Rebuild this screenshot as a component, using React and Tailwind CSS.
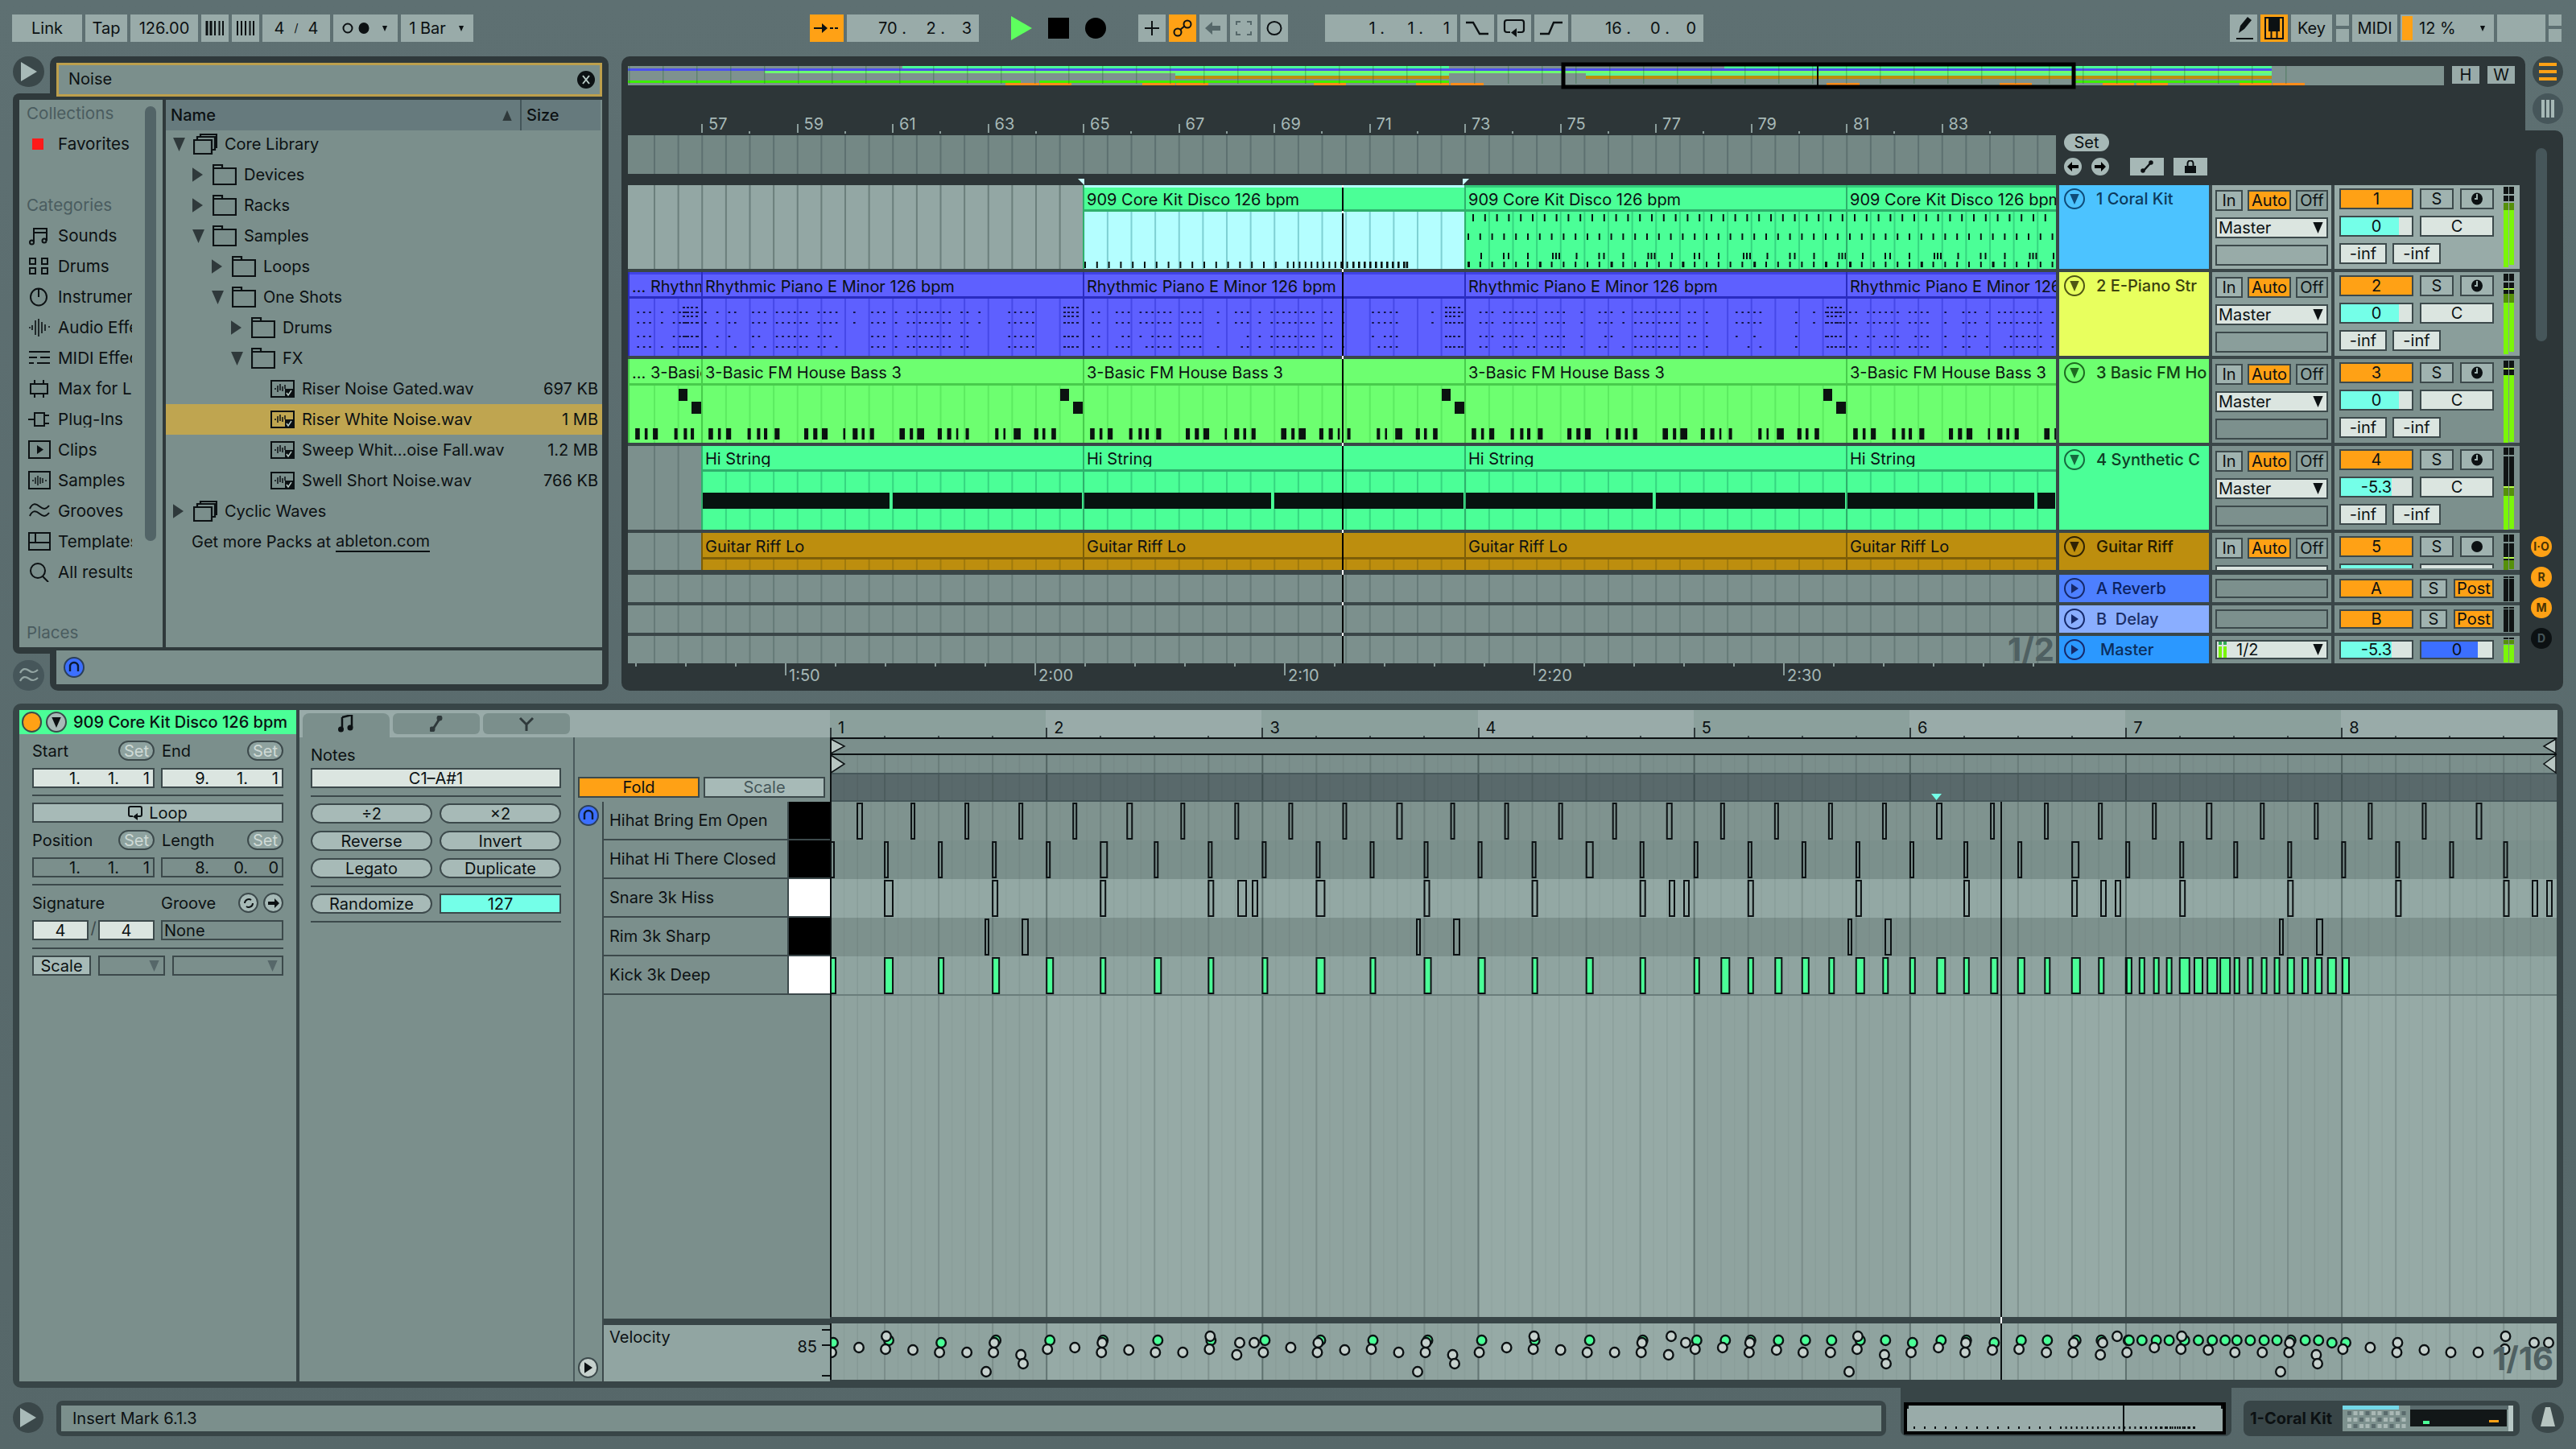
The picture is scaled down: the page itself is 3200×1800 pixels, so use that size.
import React from 'react';

const r = (i) => { const s = Math.sin(i * 12.9898) * 43758.5453; return s - Math.floor(s); };

/* ---------- small drawings ---------- */
const Tri = ({ dir = 'right', className = '' }) => {
  const p = { right: '0,0 12,8 0,16', down: '0,0 14,0 7,16', up: '7,0 14,16 0,16' }[dir];
  return <svg viewBox={dir === 'right' ? '0 0 12 16' : '0 0 14 16'} className={className}><polygon points={p} fill="currentColor" /></svg>;
};
const Folder = () => (
  <svg width="30" height="26" viewBox="0 0 30 26" fill="none" stroke="#0c1113" strokeWidth="2.2" className="shrink-0"><path d="M1 5h28v20H1zM1 5V1h11v4" /></svg>
);
const Stack = () => (
  <svg width="30" height="26" viewBox="0 0 30 26" fill="none" stroke="#0c1113" strokeWidth="2.2" className="shrink-0"><path d="M1 8h22v17H1zM5 8V4h22v16h-4M9 4V1h20v16h-2" /></svg>
);
const FileI = () => (
  <svg width="30" height="22" viewBox="0 0 30 22" className="shrink-0" fill="none" stroke="#0c1113" strokeWidth="2"><path d="M1 1h28v20H1z" /><path d="M5 11h2M9 7v8M12 5v8M15 8v6M18 6v5" strokeWidth="1.5" /><rect x="18" y="11" width="11" height="10" fill="#0c1113" stroke="none" /><path d="M20 16l2 3 4-6" stroke="#b9cbc6" strokeWidth="1.5" /></svg>
);
const S = ({ children }) => <svg width="28" height="24" viewBox="0 0 28 24" fill="none" stroke="#0c1113" strokeWidth="2" className="shrink-0">{children}</svg>;
const sideIcons = {
  sounds: <S><path d="M7 20V3h16v15M7 8h16" /><circle cx="4.5" cy="20" r="2.5" /><circle cx="20" cy="18" r="2.5" /></S>,
  drums: <S><path d="M2 2h7v7H2zM17 2h7v7h-7zM2 14h7v7H2zM17 14h7v7h-7z" /></S>,
  inst: <S><ellipse cx="13" cy="12" rx="10" ry="10.5" /><path d="M13 1v11" /></S>,
  audio: <S><path d="M1 12h2M5 9v6M9 3v18M13 1v22M17 5v14M21 8v8M25 11h2" strokeWidth="1.6" /></S>,
  midi: <S><path d="M1 4h26M1 4h0M1 11h10M15 11h12M1 18h6M11 18h16" /></S>,
  max: <S><path d="M3 6h21v12H3zM8 1v5M19 1v5M8 18v5M19 18v5" /></S>,
  plug: <S><path d="M8 4h12v16H8zM0 12h8M20 7h6M20 17h6" /></S>,
  clips: <S><path d="M1 1h26v21H1z" /><path d="M11 6l8 5.5-8 5.5z" fill="#0c1113" stroke="none" /></S>,
  samples: <S><path d="M1 1h26v21H1z" /><path d="M5 12h2M9 8v8M12 6v12M15 8v8M18 9v6M21 12h2" strokeWidth="1.4" /></S>,
  grooves: <S><path d="M2 9c3-7 7-7 12-3s8 4 12-1M2 18c3-7 7-7 12-3s8 4 12-1" /></S>,
  templ: <S><path d="M1 1h26v21H1zM1 13h26M9 1v12" /></S>,
  all: <S><ellipse cx="12" cy="10" rx="9" ry="9" /><path d="M18 17l7 7" /></S>,
};
const Headphone = ({ size = 'w-[26px] h-[26px]' }) => (
  <div className={`${size} rounded-full border-2 border-[#2b3f5a] bg-[#3c6fff] flex items-center justify-center shrink-0`}>
    <svg width="14" height="16" viewBox="0 0 14 16" fill="none" stroke="#0c1a33" strokeWidth="2.4"><path d="M2 13V7a5 5 0 0 1 10 0v6" /></svg>
  </div>
);
const Wave2 = () => (
  <svg width="24" height="22" viewBox="0 0 24 22" fill="none" stroke="#93a5a3" strokeWidth="2.2"><path d="M1 8c3-6 7-6 11-3s7 3 11-1M1 18c3-6 7-6 11-3s7 3 11-1" /></svg>
);

/* ---------- transport ---------- */
const TB = ({ className = '', children }) => (
  <div className={`h-[34px] flex items-center justify-center shrink-0 bg-[#99aba9] ${className}`}>{children}</div>
);
const Pos = ({ parts, className = '', last = 'w-[33px]', mid = 'w-[48px]', pad = 'pr-[9px]' }) => (
  <div className={`flex items-center justify-end ${pad} ${className}`}>
    {parts.map((p, i) => <span key={i} className={`text-right ${i === parts.length - 1 ? last : mid}`}>{p}</span>)}
  </div>
);
const Stack2 = () => (
  <div className="w-[16px] h-[34px] flex flex-col justify-between shrink-0">
    <div className="h-[14px] bg-[#99aba9]" /><div className="h-[16px] bg-[#99aba9]" />
  </div>
);

function TopBar() {
  return (
    <div className="h-[70px] shrink-0 pt-[18px] pl-[15px] flex gap-[4px] items-start">
      <TB className="w-[87px]">Link</TB>
      <TB className="w-[52px]">Tap</TB>
      <TB className="w-[84px]">126.00</TB>
      <TB className="w-[34px]"><svg width="24" height="18"><path d="M2 0v18M7 0v18M12 0v18M17.5 0v18M22 0v18" stroke="#0c1113" strokeWidth="2" /><path d="M2 0v18M7 0v18" stroke="#0c1113" strokeWidth="3" /></svg></TB>
      <TB className="w-[34px]"><svg width="24" height="18"><path d="M2 0v18M7 0v18M12 0v18M17.5 0v18M22 0v18" stroke="#0c1113" strokeWidth="2" /></svg></TB>
      <TB className="w-[84px] gap-[12px]"><span>4</span><span className="text-[14px]">/</span><span>4</span></TB>
      <TB className="w-[80px] gap-[2px]">
        <svg width="34" height="14"><circle cx="7" cy="7" r="5.5" fill="none" stroke="#0c1113" strokeWidth="2" /><ellipse cx="27" cy="7" rx="6.5" ry="7" fill="#0c1113" /></svg>
        <Tri dir="down" className="w-[10px] h-[7px] ml-[12px] text-[#0c1113]" />
      </TB>
      <TB className="w-[90px] gap-[14px]"><span>1 Bar</span><Tri dir="down" className="w-[10px] h-[7px] text-[#0c1113]" /></TB>

      <TB className="w-[42px] ml-[414px] !bg-[#ffa115]"><svg width="32" height="16" fill="#0c1113"><path d="M0 7h10V2l7 6-7 6V9H0zM20 7h4v2h-4zM26 7h4v2h-4z" /></svg></TB>
      <TB className="w-[164px]"><Pos className="w-full" parts={['70 .', '2 .', '3']} /></TB>
      <div className="ml-[36px] w-[26px] h-[34px] flex items-center shrink-0"><svg width="26" height="30"><polygon points="0,0 26,15 0,30" fill="#5eff5e" /></svg></div>
      <div className="ml-[16px] w-[26px] h-[34px] flex items-center shrink-0"><div className="w-[26px] h-[26px] bg-black" /></div>
      <div className="ml-[16px] w-[26px] h-[34px] flex items-center shrink-0"><div className="w-[26px] h-[26px] rounded-full bg-black" /></div>
      <TB className="w-[34px] ml-[36px]"><svg width="20" height="18" stroke="#0c1113" strokeWidth="2"><path d="M10 0v18M1 9h18" /></svg></TB>
      <TB className="w-[34px] !bg-[#ffa115]"><svg width="24" height="22" fill="none" stroke="#0c1113" strokeWidth="2"><ellipse cx="6" cy="16" rx="4.5" ry="4.5" /><ellipse cx="18" cy="6" rx="4.5" ry="4.5" /><path d="M9 13l6-5" /></svg></TB>
      <TB className="w-[34px]"><svg width="20" height="16" fill="#56686a"><path d="M0 8l9-8v5h10v6H9v5z" /></svg></TB>
      <TB className="w-[34px]"><svg width="20" height="18" fill="none" stroke="#56686a" strokeWidth="2"><path d="M1 5V1h5M14 1h5v4M19 13v4h-5M6 17H1v-4" /></svg></TB>
      <TB className="w-[34px]"><svg width="20" height="18" fill="none" stroke="#0c1113" strokeWidth="2"><ellipse cx="10" cy="9" rx="8.5" ry="8" /></svg></TB>

      <TB className="w-[164px] ml-[42px]"><Pos className="w-full" parts={['1 .', '1 .', '1']} /></TB>
      <TB className="w-[42px]"><svg width="28" height="18" fill="none" stroke="#0c1113" strokeWidth="2.4"><path d="M0 2h9l8 14h11" /></svg></TB>
      <TB className="w-[42px]"><svg width="28" height="24" fill="none" stroke="#0c1113" strokeWidth="2.2"><path d="M9 17H5a3 3 0 0 1-3-3V5a3 3 0 0 1 3-3h18a3 3 0 0 1 3 3v9a3 3 0 0 1-3 3h-5" /><path d="M17 12v11l-7-5.5z" fill="#0c1113" stroke="none" /></svg></TB>
      <TB className="w-[42px]"><svg width="28" height="18" fill="none" stroke="#0c1113" strokeWidth="2.4"><path d="M0 16h11l6-14h11" /></svg></TB>
      <TB className="w-[164px]"><Pos className="w-full" parts={['16 .', '0 .', '0']} /></TB>

      <TB className="w-[34px] ml-[650px]"><svg width="24" height="28" fill="#0c1113"><path d="M6 20l2-9 9-11 5 4-9 11zM3 26h21v2H3z" /><path d="M6 21l5-2" /></svg></TB>
      <TB className="w-[34px] !bg-[#ffa115]"><svg width="24" height="28" fill="none" stroke="#0c1113" strokeWidth="2"><path d="M1 1h22v26H1zM8.5 17v10M15.5 17v10" /><path d="M6 1h5v16H6zM13 1h5v16h-5z" fill="#0c1113" /></svg></TB>
      <TB className="w-[51px]">Key</TB>
      <div className="ml-[1px]"><Stack2 /></div>
      <TB className="w-[56px]">MIDI</TB>
      <TB className="w-[116px] !justify-start gap-[8px]">
        <div className="ml-[2px] h-[30px] w-[13px] bg-[#ffa115]" /><span>12 %</span>
        <Tri dir="down" className="w-[10px] h-[7px] ml-[20px] text-[#0c1113]" />
      </TB>
      <TB className="w-[60px]" />
      <Stack2 />
    </div>
  );
}

/* ---------- browser ---------- */
const sideItems = [
  ['sounds', 'Sounds'], ['drums', 'Drums'], ['inst', 'Instruments'], ['audio', 'Audio Effects'], ['midi', 'MIDI Effects'], ['max', 'Max for Live'],
  ['plug', 'Plug-Ins'], ['clips', 'Clips'], ['samples', 'Samples'], ['grooves', 'Grooves'], ['templ', 'Templates'], ['all', 'All results'],
];
const tree = [
  { l: 0, a: 'down', i: 'stack', t: 'Core Library' },
  { l: 1, a: 'right', i: 'folder', t: 'Devices' },
  { l: 1, a: 'right', i: 'folder', t: 'Racks' },
  { l: 1, a: 'down', i: 'folder', t: 'Samples' },
  { l: 2, a: 'right', i: 'folder', t: 'Loops' },
  { l: 2, a: 'down', i: 'folder', t: 'One Shots' },
  { l: 3, a: 'right', i: 'folder', t: 'Drums' },
  { l: 3, a: 'down', i: 'folder', t: 'FX' },
  { l: 4, i: 'file', t: 'Riser Noise Gated.wav', s: '697 KB' },
  { l: 4, i: 'file', t: 'Riser White Noise.wav', s: '1 MB', sel: true },
  { l: 4, i: 'file', t: 'Sweep Whit...oise Fall.wav', s: '1.2 MB' },
  { l: 4, i: 'file', t: 'Swell Short Noise.wav', s: '766 KB' },
  { l: 0, a: 'right', i: 'stack', t: 'Cyclic Waves' },
];
const indents = ['pl-[9px]', 'pl-[33px]', 'pl-[57px]', 'pl-[81px]', 'pl-[105px]'];

function Browser() {
  return (
    <div className="w-[740px] shrink-0 flex flex-col">
      <div className="h-[54px] flex">
        <div className="w-[46px] flex flex-col justify-between">
          <div className="w-[39px] h-[38px] rounded-full bg-[#3a4749] flex items-center justify-center">
            <svg width="22" height="26"><polygon points="1,1 21,13 1,25" fill="#a8bab8" /></svg>
          </div>
          <div className="h-[8px] rounded-tl-[8px] bg-[#2f393b]" />
        </div>
        <div className="flex-1 bg-[#2f393b] rounded-t-[10px] pt-[8px] px-[8px]">
          <div className="h-[42px] border-[3px] border-[#bd9f4c] bg-[#7b8f8c] flex items-center justify-between pl-[12px] pr-[6px]">
            <span className="pb-[3px]">Noise</span>
            <div className="w-[22px] h-[22px] rounded-full bg-[#0c1113] flex items-center justify-center">
              <svg width="12" height="14" stroke="#b9cbc6" strokeWidth="2"><path d="M2 2l8 10M10 2L2 12" /></svg>
            </div>
          </div>
        </div>
      </div>

      <div className="h-[680px] bg-[#2f393b] flex pl-[8px] pr-[8px] gap-[4px]">
        <div className="w-[178px] bg-[#7b8f8c] relative shrink-0 overflow-hidden text-[20.6px]">
          <div className="absolute left-[156px] top-[8px] w-[14px] h-[540px] rounded-full bg-[#526467]" />
          <div className="h-[34px] pl-[9px] flex items-center text-[#4a5c5f]">Collections</div>
          <div className="h-[38px] mt-[2px] pl-[16px] flex items-center gap-[18px]">
            <div className="w-[14px] h-[14px] bg-[#ff1a1a]" /><span>Favorites</span>
          </div>
          <div className="h-[38px]" />
          <div className="h-[38px] pl-[9px] flex items-center text-[#4a5c5f]">Categories</div>
          {sideItems.map(([k, t]) => (
            <div key={t} className="h-[38px] pl-[11px] flex items-center gap-[9px]">
              {sideIcons[k]}
              <span className="w-[92px] overflow-hidden whitespace-nowrap">{t}</span>
            </div>
          ))}
          <div className="h-[36px] mt-[38px] pl-[9px] flex items-center text-[#4a5c5f]">Places</div>
        </div>

        <div className="flex-1 bg-[#7b8f8c] flex flex-col overflow-hidden">
          <div className="h-[38px] bg-[#667a7d] flex items-center shrink-0 mr-[2px]">
            <span className="pl-[6px] font-medium w-[417px]">Name</span>
            <Tri dir="up" className="w-[14px] h-[13px] text-[#2f393b]" />
            <div className="ml-[9px] w-[2px] h-full bg-[#44565a]" />
            <span className="pl-[6px] font-medium">Size</span>
          </div>
          <div className="-mt-[2px]">
            {tree.map((n) => (
              <div key={n.t} className={`h-[38px] flex items-center whitespace-nowrap ${indents[n.l]} ${n.sel ? 'bg-[#bfa550]' : ''}`}>
                <div className="w-[25px] shrink-0 flex">
                  {n.a === 'right' && <Tri dir="right" className="w-[13px] h-[18px] text-[#2f393b]" />}
                  {n.a === 'down' && <Tri dir="down" className="w-[15px] h-[17px] text-[#2f393b]" />}
                </div>
                {n.i === 'stack' && <Stack />}
                {n.i === 'folder' && <Folder />}
                {n.i === 'file' && <FileI />}
                <span className="ml-[9px]">{n.t}</span>
                {n.s && <span className="ml-auto pr-[5px]">{n.s}</span>}
              </div>
            ))}
            <div className="h-[38px] pl-[32px] flex items-center gap-[6px] whitespace-nowrap">
              <span>Get more Packs at</span><span className="border-b-2 border-[#0c1113] leading-[24px]">ableton.com</span>
            </div>
          </div>
        </div>
      </div>

      <div className="h-[54px] flex">
        <div className="w-[46px] flex flex-col">
          <div className="h-[8px] rounded-bl-[8px] bg-[#2f393b]" />
          <div className="mt-[8px] w-[39px] h-[38px] rounded-full bg-[#46565a] flex items-center justify-center"><Wave2 /></div>
        </div>
        <div className="flex-1 bg-[#2f393b] rounded-b-[10px] pt-[4px] px-[8px]">
          <div className="h-[42px] bg-[#7b8f8c] flex items-center pl-[9px]"><Headphone /></div>
        </div>
      </div>
    </div>
  );
}

/* ---------- arrangement ---------- */
const LW = 1774;
const gridXs = Array.from({ length: 60 }, (_, k) => 32 + 29.625 * k);

const Grid = ({ x0 = 0, w = LW, h, color, className = '' }) => (
  <svg className={`absolute top-0 left-0 ${className}`} width={w} height={h}>
    {gridXs.map((x) => <rect key={x} x={x - x0} y="0" width="2" height={h} fill={color} />)}
  </svg>
);

function Overview() {
  const g = '#4bff97', b = '#4c50f0', l = '#6dff70', o = '#bd8e0e', n = '#3bf000', a = '#ff8c1a';
  const R = [
    [1121, 679, 0, 3, g], [2142, 680, 0, 3, g],
    [780, 2042, 3, 3, b],
    [950, 1872, 6, 3, l],
    [1460, 340, 9, 3, '#5cf29a'], [1970, 852, 9, 3, '#5cf29a'],
    [1460, 340, 12, 4, o], [1970, 852, 12, 4, o],
    [780, 488, 18, 3, n], [1291, 509, 18, 3, n], [2576, 246, 18, 3, n],
  ];
  const O = [[1249, 42], [1292, 39], [1419, 41], [1461, 40], [1632, 40], [1759, 41], [1802, 41], [2269, 41], [2484, 40], [2612, 39], [2654, 39], [2782, 40], [2823, 40]];
  return (
    <div className="flex h-[24px]">
      <svg width="2256" height="24" className="shrink-0 bg-[#7e928f] overflow-visible">
        {R.map(([x, w, y, h, c], i) => <rect key={i} x={x - 780} y={y} width={w} height={h} fill={c} />)}
        {O.map(([x, w]) => <rect key={x} x={x - 780} y="21" width={w} height="3" fill={a} />)}
        {Array.from({ length: 50 }, (_, i) => <rect key={i} x={i * 42 + 1} y="0" width="1.5" height="22" fill="#263" opacity=".35" />)}
        <rect x="1162" y="-2" width="634" height="28" fill="none" stroke="#000" strokeWidth="5" />
        <rect x="1477" y="0" width="2" height="24" fill="#000" />
      </svg>
      <TB2 className="ml-[10px]">H</TB2>
      <TB2 className="ml-[10px]">W</TB2>
    </div>
  );
}
const TB2 = ({ className = '', children }) => (
  <div className={`w-[34px] h-[22px] bg-[#99aba9] flex items-center justify-center ${className}`}>{children}</div>
);

function BarRuler() {
  const labels = [57, 59, 61, 63, 65, 67, 69, 71, 73, 75, 77, 79, 81, 83];
  return (
    <div className="h-[60px] pl-[91px] flex items-end w-[1774px] overflow-hidden">
      {labels.map((n) => (
        <div key={n} className="w-[118.5px] shrink-0 h-[22px] flex relative text-[#a6b8b6]">
          <div className="w-[2px] h-[11px] mt-[10px] bg-[#8a9c9a]" />
          <span className="pl-[7px] leading-[20px]">{n}</span>
          <div className="absolute left-[59px] bottom-0 w-[2px] h-[3px] bg-[#8a9c9a]" />
        </div>
      ))}
    </div>
  );
}

function TimeRuler() {
  const labs = { 3: '1:50', 8: '2:00', 13: '2:10', 18: '2:20', 23: '2:30' };
  return (
    <div className="h-[34px] flex pl-[9px] w-[1774px] overflow-hidden">
      {Array.from({ length: 29 }, (_, i) => (
        <div key={i} className="w-[62px] shrink-0 flex text-[#a6b8b6] whitespace-nowrap">
          <div className={`w-[2px] bg-[#8a9c9a] ${labs[i] ? 'h-[15px]' : 'h-[4px]'}`} />
          {labs[i] && <span className="pl-[3px] pt-[3px] leading-[24px]">{labs[i]}</span>}
        </div>
      ))}
    </div>
  );
}

function DrumNotes({ w, sel }) {
  const rects = [];
  if (!sel) {
    for (let i = 0; i * 14.8 + 8 < w; i++) rects.push([8 + i * 14.8, 3, 2, 9]);
    for (let i = 0; i * 14.8 + 2 < w; i++) rects.push([2 + i * 14.8, 27, 2, 8]);
    [18, 46, 52, 76, 107, 111, 115].forEach((p) => { for (let c = 0; c * 118.5 + p < w; c++) rects.push([p + c * 118.5, 51, 2, 8]); });
    for (let i = 0; i * 14.8 + 2 < w; i++) rects.push([2 + i * 14.8, 62, 2 + (i % 6 === 0 ? 1 : 0), 7]);
  } else {
    const stops = [];
    let x = 0;
    while (x < 474) {
      stops.push(x);
      x += x < 240 ? 14.8 : x < 330 ? 7.4 : x < 390 ? 7 : 3.6;
      if (x > 400) break;
    }
    stops.forEach((p) => rects.push([p, 62, p > 330 ? 2.6 : 2, 8]));
  }
  return rects.map(([x, y, wd, h], i) => <rect key={i} x={x} y={y} width={wd} height={h} fill="#0b1210" />);
}
function PianoNotes({ w, seed }) {
  const out = [];
  for (let i = 0; i * 7.4 + 2 < w; i++) {
    const x = 2 + i * 7.4;
    if (r((i + seed * 3) % 64 + 1) < 0.38) continue;
    [16, 29, 46, 59].forEach((y, j) => { if (!(j > 1 && r(i + j) < 0.2)) out.push(<rect key={`${i}-${j}`} x={x} y={y} width="2.6" height="2" fill="#14164a" />); });
  }
  const ends = w < 100 ? [w - 25] : w >= 474 ? [w - 26] : [];
  ends.forEach((e) => {
    [10, 16, 21, 29, 46, 59].forEach((y) => [0, 5, 10, 16].forEach((d) => out.push(<rect key={`c${y}${d}`} x={e + d} y={y} width="3" height="2" fill="#14164a" />)));
  });
  return out;
}
const bassX = [[232, 243], [255, 262], [275, 287], [327, 335], [350, 358], [367, 375], [393, 405], [465, 475], [487, 497], [508, 522], [560, 565], [583, 595], [605, 612], [625, 635], [697, 710], [722, 730], [740, 757], [790, 800], [813, 823], [835, 840], [858, 866], [930, 938], [950, 955], [975, 992], [1025, 1035], [1045, 1052], [1067, 1078]];
function BassNotes({ w, seed }) {
  const out = bassX.map(([a, b]) => [(a - 218) / 1.96, (b - a) / 1.96]).filter(([x]) => x < w).map(([x, wd], i) => <rect key={i} x={x} y="53" width={wd} height="14" fill="#0b1210" />);
  if (w >= 474 || seed === 'short') {
    out.push(<rect key="a" x={w - 30} y="4" width="11" height="15" fill="#0b1210" />);
    out.push(<rect key="b" x={w - 14} y="20" width="13" height="15" fill="#0b1210" />);
  }
  return out;
}

const Clip = ({ x, w, text, hdr, body, line, hh = 'h-[33px]', h, notes, className = '', bodyLine }) => (
  <div className={`absolute top-0 flex flex-col overflow-hidden border-l-2 ${line} ${className}`} style={{ left: x, width: w, height: h }}>
    <div className={`${hh} shrink-0 ${hdr} border-b-[3px] ${line} pl-[3px] pt-[3px] flex items-center`}>
      <span className="block min-w-0 overflow-hidden whitespace-nowrap">{text}</span>
    </div>
    <div className={`flex-1 relative ${body}`}>
      <Grid x0={x + 2} w={w} h={h} color={bodyLine} />
      <svg className="absolute top-0 left-0" width={w} height={h}>{notes}</svg>
    </div>
  </div>
);

const clipXs = [[91, 474], [565, 474], [1039, 474], [1513, 261]];

const trackDefs = [
  {
    key: 't1', h: 'h-[104px]', px: 104, name: '1 Coral Kit', hc: 'bg-[#4cc3ff] text-[#0c3a5c]', ac: 'border-[#0f4c7a] text-[#0f4c7a]', base: 'bg-[#93a7a4]', gl: '#6b7f7c', col: 'bg-[#98aba8]', n: '1', vol: '0', f: 'w-[82%]',
    meter: [[9, 'bg-[#101414]'], [2, ''], [7, 'bg-[#101414]'], [2, ''], [9, 'bg-[#55900a]'], [71, 'bg-[#7bf50a]']],
    lane: (h) => <>
      <Clip x={565} w={474} h={h} text="909 Core Kit Disco 126 bpm" hdr="bg-[#4bff97] border-t-[3px] border-t-[#b4feff]" body="bg-[#b4feff]" line="border-[#2fb06c]" bodyLine="#7fd0d3" notes={<DrumNotes w={474} sel />} />
      {[[1039, 474], [1513, 261]].map(([x, w]) => <Clip key={x} x={x} w={w} h={h} text="909 Core Kit Disco 126 bpm" hdr="bg-[#4bff97] border-t-[3px] border-t-[#33c97a]" body="bg-[#4bff97]" line="border-[#2fb06c]" bodyLine="#36d680" notes={<DrumNotes w={w} />} />)}
    </>,
  },
  {
    key: 't2', h: 'h-[104px]', px: 104, name: '2 E-Piano Str', hc: 'bg-[#e8ff5e] text-[#3c4210]', ac: 'border-[#4f5514] text-[#4f5514]', base: 'bg-[#5e60ff]', gl: '#4648e8', col: 'bg-[#8a9e9b]', n: '2', vol: '0', f: 'w-[82%]',
    meter: [[9, 'bg-[#101414]'], [2, ''], [7, 'bg-[#101414]'], [2, 'bg-[#b6ff4a]'], [5, 'bg-[#101414]'], [11, 'bg-[#55900a]'], [64, 'bg-[#7bf50a]']],
    lane: (h) => <>
      <Clip x={0} w={91} h={h} text="... Rhythmic" hdr="bg-[#5e60ff] border-t-[3px] border-t-[#4043e8]" body="bg-[#5e60ff]" line="border-[#2a2cc0]" bodyLine="#4648e8" notes={<PianoNotes w={91} seed={9} />} />
      {clipXs.map(([x, w], i) => <Clip key={x} x={x} w={w} h={h} text="Rhythmic Piano E Minor 126 bpm" hdr="bg-[#5e60ff] border-t-[3px] border-t-[#4043e8]" body="bg-[#5e60ff]" line="border-[#2a2cc0]" bodyLine="#4648e8" notes={<PianoNotes w={w} seed={i} />} />)}
    </>,
  },
  {
    key: 't3', h: 'h-[104px]', px: 104, name: '3 Basic FM Ho', hc: 'bg-[#6dff70] text-[#143f16]', ac: 'border-[#1d6a20] text-[#1d6a20]', base: 'bg-[#6dff70]', gl: '#5ceb60', col: 'bg-[#7c908d]', n: '3', vol: '0', f: 'w-[82%]',
    meter: [[9, 'bg-[#101414]'], [2, 'bg-[#b6ff4a]'], [7, 'bg-[#101414]'], [86, 'bg-[#7bf50a]']],
    lane: (h) => <>
      <Clip x={0} w={91} h={h} text="... 3-Basic FM" hdr="bg-[#6dff70]" body="bg-[#6dff70]" line="border-[#48cc4c]" bodyLine="#5ceb60" notes={<BassNotes w={91} seed="short" />} />
      {clipXs.map(([x, w], i) => <Clip key={x} x={x} w={w} h={h} text="3-Basic FM House Bass 3" hdr="bg-[#6dff70]" body="bg-[#6dff70]" line="border-[#48cc4c]" bodyLine="#5ceb60" notes={<BassNotes w={w} seed={i} />} />)}
    </>,
  },
  {
    key: 't4', h: 'h-[104px]', px: 104, name: '4 Synthetic C', hc: 'bg-[#4bff97] text-[#0f3d25]', ac: 'border-[#16693e] text-[#16693e]', base: 'bg-[#7c908d]', gl: '#667a78', col: 'bg-[#7c908d]', n: '4', vol: '-5.3', f: 'w-[72%]',
    meter: [[9, 'bg-[#101414]'], [2, ''], [37, 'bg-[#101414]'], [2, 'bg-[#b6ff4a]'], [10, 'bg-[#55900a]'], [44, 'bg-[#7bf50a]']],
    lane: (h) => clipXs.map(([x, w]) => (
      <Clip key={x} x={x} w={w} h={h} hh="h-[32px]" text="Hi String" hdr="bg-[#4bff97]" body="bg-[#4bff97]" line="border-[#2fb06c]" bodyLine="#36d680"
        notes={<><rect x="-2" y="26" width={Math.min(234, w)} height="20" fill="#071310" />{w > 236 && <rect x="236" y="26" width={w - 236 - 3} height="20" fill="#071310" />}</>} />
    )),
  },
  {
    key: 't5', h: 'h-[46px]', px: 46, name: 'Guitar Riff', hc: 'bg-[#bd8e0e] text-[#241a02]', ac: 'border-[#2f2204] text-[#2f2204]', base: 'bg-[#7c908d]', gl: '#667a78', col: 'bg-[#7c908d]', n: '5', rec: true, short: true,
    meter: [[9, 'bg-[#101414]'], [2, ''], [17, 'bg-[#101414]'], [2, 'bg-[#b6ff4a]'], [2, 'bg-[#101414]'], [14, 'bg-[#55900a]']],
    lane: (h) => clipXs.map(([x, w]) => (
      <Clip key={x} x={x} w={w} h={h} text="Guitar Riff Lo" hdr="bg-[#bd8e0e]" body="bg-[#bd8e0e]" line="border-[#7d5e08]" bodyLine="#a07a0c" notes={null} />
    )),
  },
];
const sendDefs = [
  { key: 'a', name: 'A Reverb', hc: 'bg-[#4d7fff] text-[#0c2260]', n: 'A' },
  { key: 'b', name: 'B  Delay', hc: 'bg-[#8aaeff] text-[#1a2d66]', n: 'B' },
];

const Cell = ({ className = '', children }) => (
  <div className={`border-2 border-[#3c494b] flex items-center justify-center shrink-0 overflow-hidden ${className}`}>{children}</div>
);
const Vol = ({ text, fill, color = 'bg-[#74ffe8]', className = '' }) => (
  <Cell className={`relative bg-[#dbe5e0] ${className}`}>
    <div className={`absolute inset-y-0 left-0 ${fill} ${color}`} />
    <span className="relative">{text}</span>
  </Cell>
);
const Meter = ({ segs }) => (
  <div className="flex gap-[1px] ml-[12px] mt-[2px] items-start">
    {[0, 1].map((c) => <div key={c} className="w-[6px] flex flex-col">{segs.map(([h, cl], i) => <div key={i} className={cl} style={{ height: c && i === segs.length - 1 ? h - 3 : h }} />)}</div>)}
  </div>
);
const ArrowC = ({ dir = 'down', className = '' }) => (
  <div className={`w-[26px] h-[26px] rounded-full border-2 flex items-center justify-center shrink-0 ${className}`}>
    <Tri dir={dir} className={dir === 'down' ? 'w-[12px] h-[13px]' : 'w-[9px] h-[14px]'} />
  </div>
);

function TrackRow({ t }) {
  return (
    <div className={`flex gap-[4px] ${t.h}`}>
      <div className={`w-[1774px] relative overflow-hidden shrink-0 ${t.base}`}>
        <Grid h={t.px} color={t.gl} />
        {t.lane(t.px)}
      </div>
      <div className={`w-[186px] shrink-0 pl-[6px] pt-[4px] flex items-start gap-[14px] overflow-hidden whitespace-nowrap ${t.hc}`}>
        <ArrowC className={t.ac} />
        <span className="leading-[26px] font-medium">{t.name}</span>
      </div>
      <div className={`w-[148px] shrink-0 pl-[4px] pt-[6px] flex flex-col gap-[8px] overflow-hidden ${t.col}`}>
        <div className="flex gap-[6px]">
          <Cell className="w-[34px] h-[26px] bg-[#a0b3b0]">In</Cell>
          <Cell className="w-[54px] h-[26px] bg-[#ffa115]">Auto</Cell>
          <Cell className="w-[40px] h-[26px] bg-[#8ba09d]">Off</Cell>
        </div>
        {!t.short && <>
          <Cell className="w-[140px] h-[26px] bg-[#dbe5e0] !justify-between pl-[2px] pr-[4px]"><span>Master</span><Tri dir="down" className="w-[13px] h-[14px]" /></Cell>
          <Cell className="w-[140px] h-[26px]" />
        </>}
        {t.short && <div className="w-[140px] h-[6px] bg-[#dbe5e0] border-2 border-b-0 border-[#3c494b]" />}
      </div>
      <div className={`w-[230px] shrink-0 pl-[6px] flex overflow-hidden ${t.col}`}>
        <div className="w-[192px] pt-[4px] flex flex-col gap-[8px] shrink-0">
          <div className="flex gap-[8px]">
            <Cell className="w-[92px] h-[26px] bg-[#ffa115]">{t.n}</Cell>
            <Cell className="w-[42px] h-[26px] bg-[#a0b3b0]">S</Cell>
            <Cell className="w-[42px] h-[26px] bg-[#a0b3b0]">
              {t.rec ? <div className="w-[14px] h-[14px] rounded-full bg-[#0c1113]" /> : <svg width="14" height="16"><ellipse cx="7" cy="8" rx="7" ry="7.5" fill="#0c1113" /><path d="M7 2v6H4" stroke="#a0b3b0" strokeWidth="2" fill="none" /></svg>}
            </Cell>
          </div>
          {!t.short && <>
            <div className="flex gap-[8px]">
              <Vol text={t.vol} fill={t.f} className="w-[92px] h-[26px]" />
              <Cell className="w-[92px] h-[26px] bg-[#dbe5e0]">C</Cell>
            </div>
            <div className="flex gap-[7px]">
              <Cell className="w-[59px] h-[26px] bg-[#dbe5e0]">-inf</Cell>
              <Cell className="w-[60px] h-[26px] bg-[#dbe5e0]">-inf</Cell>
            </div>
          </>}
          {t.short && <div className="flex gap-[8px]">
            <div className="w-[92px] h-[6px] border-2 border-b-0 border-[#3c494b] bg-[#74ffe8]" />
            <div className="w-[92px] h-[6px] border-2 border-b-0 border-[#3c494b] bg-[#dbe5e0]" />
          </div>}
        </div>
        <Meter segs={t.meter} />
      </div>
    </div>
  );
}

function SendRow({ name, hc, n, master }) {
  return (
    <div className="flex gap-[4px] h-[34px]">
      <div className="w-[1774px] relative overflow-hidden shrink-0 bg-[#7c908d]">
        <Grid h={34} color="#667a78" />
        {master && <span className="absolute right-[2px] top-[-3px] text-[40px] leading-[40px] font-bold text-[#4f6062]">1/2</span>}
      </div>
      <div className={`w-[186px] shrink-0 pl-[6px] flex items-center gap-[14px] whitespace-pre font-medium ${hc}`}>
        <ArrowC dir="right" className="border-[#16296a] text-[#16296a]" />
        <span className={master ? 'pl-[5px]' : ''}>{name}</span>
      </div>
      <div className="w-[148px] shrink-0 pl-[4px] flex items-center bg-[#7c908d]">
        {master
          ? <Cell className="w-[140px] h-[24px] bg-[#dbe5e0] !justify-start pl-[2px] pr-[4px] gap-[12px]">
            <svg width="10" height="20" className="shrink-0"><rect width="4" height="4" fill="#3a5" /><rect x="6" width="4" height="4" fill="#3a5" /><rect y="6" width="4" height="14" fill="#7bf50a" /><rect x="6" y="6" width="4" height="14" fill="#7bf50a" /></svg>
            <span>1/2</span><Tri dir="down" className="w-[13px] h-[14px] ml-auto" />
          </Cell>
          : <Cell className="w-[140px] h-[24px]" />}
      </div>
      <div className="w-[230px] shrink-0 pl-[6px] flex items-center bg-[#7c908d]">
        <div className="w-[192px] flex gap-[8px] shrink-0">
          {master
            ? <>
              <Vol text="-5.3" fill="w-[72%]" className="w-[92px] h-[24px]" />
              <Vol text="0" fill="w-[80%]" color="bg-[#3c6fff]" className="w-[92px] h-[24px]" />
            </>
            : <>
              <Cell className="w-[92px] h-[24px] bg-[#ffa115]">{n}</Cell>
              <Cell className="w-[34px] h-[24px] bg-[#a0b3b0]">S</Cell>
              <Cell className="w-[50px] h-[24px] bg-[#ffa115]">Post</Cell>
            </>}
        </div>
        <div className="ml-[12px] flex gap-[1px] self-start mt-[2px]">
          {[0, 1].map((c) => (
            <div key={c} className="w-[6px] flex flex-col gap-[1px]">
              <div className="h-[2px] bg-[#101414]" />
              {master ? <><div className="h-[5px] bg-[#55900a]" /><div className="h-[22px] bg-[#7bf50a]" /></> : <div className="h-[28px] bg-[#101414]" />}
            </div>
          ))}
        </div>
      </div>
    </div>
  );
}

function Arrangement() {
  const whites = [[0, 3], [32, 3], [104, 4], [212, 4], [320, 4], [428, 4], [478, 6], [518, 4], [556, 4]];
  return (
    <div className="w-[2412px] shrink-0 flex">
      <div className="w-[2365px] shrink-0 bg-[#2d3638] rounded-l-[10px] rounded-tr-[10px] pl-[8px] pt-[12px] flex flex-col">
        <Overview />
        <div className="h-[110px] flex gap-[10px] shrink-0">
          <div className="w-[1774px] shrink-0">
            <BarRuler />
            <div className="h-[48px] mt-[2px] relative bg-[#748885] overflow-hidden"><Grid h={48} color="#5d7070" /></div>
          </div>
          <div className="pt-[60px] w-[186px] shrink-0 text-[#0c1113]">
            <div className="w-[56px] h-[22px] rounded-full bg-[#a6b8b6] flex items-center justify-center">Set</div>
            <div className="flex mt-[8px] items-center">
              <div className="w-[22px] h-[22px] rounded-full bg-[#a6b8b6] flex items-center justify-center"><svg width="14" height="12"><path d="M0 6l6-6v4h8v4H6v4z" /></svg></div>
              <div className="ml-[12px] w-[22px] h-[22px] rounded-full bg-[#a6b8b6] flex items-center justify-center"><svg width="14" height="12"><path d="M14 6L8 0v4H0v4h8v4z" /></svg></div>
              <div className="ml-[26px] w-[42px] h-[22px] bg-[#a6b8b6] flex items-center justify-center"><svg width="16" height="16" fill="none" stroke="#0c1113" strokeWidth="2.5"><path d="M3 14l10-11" /><circle cx="3" cy="13" r="1.5" /><circle cx="13" cy="3" r="1.5" /></svg></div>
              <div className="ml-[12px] w-[42px] h-[22px] bg-[#a6b8b6] flex items-center justify-center"><svg width="14" height="16" fill="#0c1113"><path d="M0 7h14v9H0z" /><path d="M3.5 7V4a3.5 3.5 0 0 1 7 0v3" fill="none" stroke="#0c1113" strokeWidth="2" /></svg></div>
            </div>
          </div>
        </div>
        <div className="mt-[14px] relative flex flex-col gap-[4px] bg-[#3a4648] w-[2350px]">
          {trackDefs.map((t) => <TrackRow key={t.key} t={t} />)}
          <div className="h-[2px] -mt-[4px]" />
          {sendDefs.map((s) => <SendRow key={s.key} {...s} />)}
          <SendRow name="Master" hc="bg-[#2b98ff] text-[#0c2e5c]" master />
          <div className="absolute left-[887px] top-0 bottom-0 w-[2px] bg-black" />
          {whites.map(([y, h]) => <div key={y} className="absolute left-[887px] w-[2px] bg-white" style={{ top: y, height: h }} />)}
          <svg className="absolute left-[559px] -top-[8px]" width="8" height="8"><polygon points="0,0 8,0 8,8" fill="#c8ffff" /></svg>
          <svg className="absolute left-[1037px] -top-[8px]" width="8" height="8"><polygon points="0,8 8,0 0,0" fill="#c8ffff" /></svg>
        </div>
        <TimeRuler />
      </div>
      <div className="w-[47px] shrink-0 flex flex-col">
        <div className="h-[92px] pl-[9px] flex flex-col gap-[8px]">
          <div className="w-[38px] h-[38px] rounded-full bg-[#3a4749] flex flex-col items-center justify-center gap-[5px]">
            {[0, 1, 2].map((i) => <div key={i} className="w-[22px] h-[4px] bg-[#ffa115]" />)}
          </div>
          <div className="w-[38px] h-[38px] rounded-full bg-[#46565a] flex items-center justify-center gap-[2px]">
            {[0, 1, 2].map((i) => <div key={i} className="w-[4px] h-[22px] bg-[#a6b8b6]" />)}
          </div>
        </div>
        <div className="flex-1 bg-[#2d3638] rounded-r-[10px] rounded-tr-[10px] relative">
          <div className="absolute left-[13px] top-[22px] w-[14px] h-[240px] rounded-full bg-[#46565a]" />
          <div className="absolute left-[7px] top-[504px] flex flex-col gap-[12px]">
            {['I·O', 'R', 'M'].map((x) => <div key={x} className="w-[26px] h-[26px] rounded-full bg-[#ffa115] flex items-center justify-center text-[14px] font-bold text-[#4a3304]">{x}</div>)}
            <div className="w-[26px] h-[26px] rounded-full bg-[#0c1113] flex items-center justify-center text-[14px] font-bold text-[#46565a]">D</div>
          </div>
        </div>
      </div>
    </div>
  );
}

/* ---------- detail ---------- */
const Pill = ({ className = '', children }) => (
  <div className={`h-[25px] rounded-full border-2 border-[#3c494b] bg-[#a7bab7] flex items-center justify-center ${className}`}>{children}</div>
);
const SetP = () => <div className="w-[45px] h-[25px] rounded-full border-2 border-[#3c494b] bg-[#8ea29f] text-[#cfdad6] flex items-center justify-center shrink-0">Set</div>;
const Sep = () => <div className="h-[2px] bg-[#3c494b]" />;
const Field = ({ parts, light = true }) => (
  <Pos parts={parts} last="w-[38px]" mid="w-[48px]" pad="pr-[4px]" className={`w-[152px] h-[25px] border-2 border-[#3c494b] ${light ? 'bg-[#dbe5e0]' : ''}`} />
);

function ClipBox() {
  return (
    <div className="w-[344px] shrink-0 bg-[#7b8f8c] flex flex-col">
      <div className="h-[30px] bg-[#4bff97] flex items-center pl-[3px] whitespace-nowrap font-medium shrink-0">
        <div className="w-[25px] h-[26px] rounded-full bg-[#ffa115] border-2 border-[#3c494b]" />
        <div className="ml-[5px] w-[26px] h-[26px] rounded-full bg-[#a7bab7] border-2 border-[#3c494b] flex items-center justify-center"><Tri dir="down" className="w-[12px] h-[13px]" /></div>
        <span className="ml-[8px]">909 Core Kit Disco 126 bpm</span>
      </div>
      <div className="pl-[16px] pr-[16px] flex flex-col">
        <div className="mt-[8px] flex h-[25px] items-center">
          <span className="w-[107px]">Start</span><SetP /><span className="ml-[9px] w-[106px]">End</span><SetP />
        </div>
        <div className="mt-[9px] flex gap-[8px]"><Field parts={['1.', '1.', '1']} /><Field parts={['9.', '1.', '1']} /></div>
        <div className="mt-[8px]"><Sep /></div>
        <div className="mt-[8px] h-[25px] border-2 border-[#3c494b] bg-[#a7bab7] flex items-center justify-center gap-[8px]">
          <svg width="18" height="18" fill="none" stroke="#0c1113" strokeWidth="2"><path d="M6 13H3a2 2 0 0 1-2-2V3a2 2 0 0 1 2-2h12a2 2 0 0 1 2 2v8a2 2 0 0 1-2 2h-3" /><path d="M12 9v9l-6-4.5z" fill="#0c1113" stroke="none" /></svg>
          <span>Loop</span>
        </div>
        <div className="mt-[9px] flex h-[25px] items-center">
          <span className="w-[107px]">Position</span><SetP /><span className="ml-[9px] w-[106px]">Length</span><SetP />
        </div>
        <div className="mt-[9px] flex gap-[8px]"><Field parts={['1.', '1.', '1']} light={false} /><Field parts={['8.', '0.', '0']} light={false} /></div>
        <div className="mt-[8px]"><Sep /></div>
        <div className="mt-[9px] flex h-[25px] items-center">
          <span className="w-[160px]">Signature</span><span className="w-[96px]">Groove</span>
          <div className="w-[25px] h-[25px] rounded-full border-2 border-[#3c494b] bg-[#a7bab7] flex items-center justify-center"><svg width="14" height="14" fill="none" stroke="#0c1113" strokeWidth="2"><path d="M2 7a5 5 0 0 1 8-4M12 7a5 5 0 0 1-8 4" /></svg></div>
          <div className="ml-[6px] w-[25px] h-[25px] rounded-full border-2 border-[#3c494b] bg-[#a7bab7] flex items-center justify-center"><svg width="14" height="12" fill="#0c1113"><path d="M14 6L8 0v4H0v4h8v4z" /></svg></div>
        </div>
        <div className="mt-[9px] flex h-[25px]">
          <Cell className="w-[70px] bg-[#dbe5e0]">4</Cell>
          <span className="w-[12px] text-center text-[#3c494b]">/</span>
          <Cell className="w-[70px] bg-[#dbe5e0]">4</Cell>
          <Cell className="ml-[8px] w-[152px] !justify-start pl-[2px]">None</Cell>
        </div>
        <div className="mt-[9px]"><Sep /></div>
        <div className="mt-[8px] flex h-[25px]">
          <Cell className="w-[73px] bg-[#a7bab7]">Scale</Cell>
          <Cell className="ml-[9px] w-[83px] !justify-end pr-[5px] text-[#566769]"><Tri dir="down" className="w-[13px] h-[14px]" /></Cell>
          <Cell className="ml-[9px] w-[138px] !justify-end pr-[5px] text-[#566769]"><Tri dir="down" className="w-[13px] h-[14px]" /></Cell>
        </div>
      </div>
    </div>
  );
}

function NotesBox() {
  return (
    <div className="w-[340px] shrink-0 bg-[#7b8f8c] pl-[14px] pr-[15px] flex flex-col">
      <div className="h-[38px] flex items-end pb-[3px] leading-[26px]">Notes</div>
      <Cell className="mt-[0px] h-[25px] bg-[#dbe5e0]">C1–A#1</Cell>
      <div className="mt-[9px]"><Sep /></div>
      <div className="mt-[8px] grid grid-cols-2 gap-x-[9px] gap-y-[9px]">
        {['÷2', '×2', 'Reverse', 'Invert', 'Legato', 'Duplicate'].map((t) => <Pill key={t}>{t}</Pill>)}
      </div>
      <div className="mt-[9px]"><Sep /></div>
      <div className="mt-[8px] grid grid-cols-2 gap-x-[9px]">
        <Pill>Randomize</Pill>
        <Cell className="h-[25px] bg-[#74ffe8]">127</Cell>
      </div>
      <div className="mt-[9px]"><Sep /></div>
    </div>
  );
}

const B = 268.2, Q = 67.05;
const hatOpen = Array.from({ length: 31 }, (_, i) => 36 + Q * i);
const hatClosed = Array.from({ length: 32 }, (_, i) => Q * i);
const snare = [...Array.from({ length: 16 }, (_, i) => 67 + 134.1 * i), 506, 524, 1042, 1060, 1578, 1596, 2114, 2132].filter((x) => x < 2140);
const rim = [192, 238, 728, 774, 1264, 1310, 1800, 1846];
const kick = [
  ...Array.from({ length: 16 }, (_, i) => ({ x: Q * i, w: [6, 10, 6, 8, 8, 6, 8, 6][i % 8] })),
  ...Array.from({ length: 17 }, (_, i) => ({ x: Q * 16 + 33.5 * i, w: [6, 10, 6, 8, 8, 6, 10, 6][i % 8] })),
  ...[[696, 6], [721, 6], [749, 6], [774, 6], [804, 12], [831, 10], [858, 12], [883, 12], [906, 6], [932, 6], [959, 6], [984, 6], [1011, 8], [1039, 7], [1065, 8], [1091, 10], [1118, 8]].map(([z, w]) => ({ x: 2200 + z / 1.568 - 1031 - w / 2, w })),
];

function GridLinesSvg({ y, h }) {
  const out = [];
  for (let i = 0; i * 16.76 < 2146; i++) {
    const c = i % 16 === 0 ? 0.38 : i % 4 === 0 ? 0.16 : i % 2 === 0 ? 0.07 : 0.035;
    out.push(<rect key={i} x={i * 16.76} y={y} width={i % 4 === 0 ? 2 : 1.5} height={h} fill="#102020" opacity={c} />);
  }
  return out;
}

function PianoCanvas() {
  const rows = [[80, '#7f938f'], [128, '#7b908c'], [176, '#93a8a4'], [224, '#7d918d'], [272, '#8fa4a0']];
  const note = (x, row, w, fill = 'none', key) => (
    <rect key={key} x={x + 1} y={row + 2} width={w} height="44" fill={fill} stroke="#0c1113" strokeWidth="2" />
  );
  return (
    <svg width="2145" height="720" className="shrink-0 block">
      <rect width="2145" height="720" fill="#96aaa6" />
      {[0, 2, 4, 6].map((b) => <rect key={b} x={b * B} y="320" width={B} height="400" fill="#7b8f8c" opacity=".25" />)}
      <rect y="0" width="2145" height="46" fill="#7b8f8c" />
      <rect y="46" width="2145" height="34" fill="#59696b" />
      {rows.map(([y, c]) => <rect key={y} y={y} width="2145" height="48" fill={c} />)}
      <GridLinesSvg y={22} h={698} />
      <rect y="0" width="2145" height="2" fill="#0c1113" />
      <rect y="20" width="2145" height="2" fill="#0c1113" />
      <rect y="44" width="2145" height="2" fill="#46575a" />
      <rect y="78" width="2145" height="2" fill="#46575a" />
      <rect y="319" width="2145" height="2" fill="#6a7d7b" />
      <polygon points="1,2 18,11 1,20" fill="#b7c5c1" stroke="#0c1113" strokeWidth="1.5" />
      <polygon points="1,22 18,33 1,44" fill="#b7c5c1" stroke="#0c1113" strokeWidth="1.5" />
      <polygon points="2144,2 2129,11 2144,20" fill="#b7c5c1" stroke="#0c1113" strokeWidth="1.5" />
      <polygon points="2144,22 2129,33 2144,44" fill="#b7c5c1" stroke="#0c1113" strokeWidth="1.5" />
      <polygon points="1368,70 1381,70 1374.5,78" fill="#74ffe8" />
      {hatOpen.map((x, i) => note(x - 3, 80, i % 5 === 0 ? 6 : 4, 'none', `o${i}`))}
      {hatClosed.map((x, i) => note(x, 128, i % 9 === 5 ? 8 : 4, 'none', `c${i}`))}
      {snare.map((x, i) => note(x, 176, x < 1000 && i % 4 === 0 ? 10 : 6, 'none', `s${i}`))}
      {rim.map((x, i) => note(x, 224, i % 2 ? 7 : 4, 'none', `r${i}`))}
      {kick.map((k, i) => note(k.x, 272, k.w, '#4bff97', `k${i}`))}
      <rect y="0" width="2" height="720" fill="#0c1113" />
      <rect x="1454" y="80" width="2" height="640" fill="#0c1113" />
    </svg>
  );
}

function VelocityCanvas() {
  const cs = [];
  kick.forEach((k, i) => cs.push({ x: k.x + k.w / 2 + 1, y: 21 + (r(i) < 0.15 ? 3 : 0), g: true }));
  hatClosed.forEach((x, i) => cs.push({ x: x + 2, y: 34 + (i % 3 === 1 ? -2 : 2) }));
  hatOpen.forEach((x, i) => cs.push({ x, y: 30 + (i % 4) * 3 }));
  snare.forEach((x, i) => cs.push({ x: x + 3, y: i % 3 === 0 ? 16 : 24 }));
  rim.forEach((x, i) => cs.push({ x: x + 2, y: i % 2 ? 50 : 60 }));
  cs.sort((a, b) => (a.g ? 0 : 1) - (b.g ? 0 : 1));
  return (
    <div className="relative w-[2145px] h-[70px] shrink-0">
      <svg width="2145" height="70" className="block">
        <rect width="2145" height="70" fill="#96aaa6" />
        {[0, 2, 4, 6].map((b) => <rect key={b} x={b * B} width={B} height="70" fill="#7b8f8c" opacity=".25" />)}
        <GridLinesSvg y={0} h={70} />
        <rect x="1454" width="2" height="70" fill="#0c1113" />
        {cs.map((c, i) => <ellipse key={i} cx={c.x} cy={c.y} rx="5.8" ry="6" fill={c.g ? '#4bff97' : '#c6d1cd'} stroke="#0c1113" strokeWidth="2.4" />)}
        <rect width="2" height="70" fill="#0c1113" />
      </svg>
      <span className="absolute right-[4px] bottom-[6px] text-[40px] leading-[40px] font-bold text-[#4f6062]">1/16</span>
    </div>
  );
}

function Detail() {
  const names = [['Hihat Bring Em Open', 'bg-black'], ['Hihat Hi There Closed', 'bg-black'], ['Snare 3k Hiss', 'bg-white'], ['Rim 3k Sharp', 'bg-black'], ['Kick 3k Deep', 'bg-white']];
  return (
    <div className="h-[850px] shrink-0 bg-[#384547] rounded-[10px] p-[8px] flex gap-[4px] w-[3168px]">
      <ClipBox />
      <div className="w-[2804px] shrink-0 flex flex-col">
        <div className="h-[34px] flex shrink-0">
          <div className="w-[659px] shrink-0 bg-[#99aba9] pl-[4px] pt-[4px] flex gap-[4px] items-start">
            <div className="w-[108px] h-[30px] rounded-t-[8px] bg-[#7b8f8c] flex items-center justify-center pb-[4px]">
              <svg width="20" height="22"><path d="M5 3l12-3v16M5 3v15" stroke="#0c1113" strokeWidth="2.5" fill="none" /><ellipse cx="3.5" cy="18" rx="3.5" ry="3.5" fill="#0c1113" /><ellipse cx="15" cy="16" rx="3.5" ry="3.5" fill="#0c1113" /></svg>
            </div>
            <div className="w-[108px] h-[26px] rounded-[6px] bg-[#7b8f8c] flex items-center justify-center">
              <svg width="16" height="20" fill="none" stroke="#2f393b" strokeWidth="3"><path d="M3 18L12 4" /><circle cx="12" cy="3" r="2" fill="#2f393b" /><circle cx="3" cy="17" r="2" fill="#2f393b" /></svg>
            </div>
            <div className="w-[108px] h-[26px] rounded-[6px] bg-[#7b8f8c] flex items-center justify-center">
              <svg width="20" height="18" fill="none" stroke="#2f393b" strokeWidth="3"><path d="M2 2l8 8 8-8M10 10v8" /></svg>
            </div>
          </div>
          <div className="flex">
            {[1, 2, 3, 4, 5, 6, 7, 8].map((n, i) => (
              <div key={n} className={`w-[268.2px] shrink-0 relative flex text-[20px] ${i % 2 ? 'bg-[#99aba9]' : 'bg-[#8ba09c]'}`}>
                <div className="mt-[22px] w-[2px] h-[12px] bg-[#2f393b]" />
                <span className="pl-[8px] pt-[10px] leading-[24px]">{n}</span>
                <div className="absolute left-[67px] bottom-0 w-[2px] h-[2px] bg-[#3c494b]" />
                <div className="absolute left-[134px] bottom-0 w-[2px] h-[2px] bg-[#3c494b]" />
                <div className="absolute left-[201px] bottom-0 w-[2px] h-[2px] bg-[#3c494b]" />
              </div>
            ))}
          </div>
        </div>
        <div className="flex flex-1 min-h-0">
          <NotesBox />
          <div className="w-[319px] shrink-0 bg-[#7b8f8c] border-l-2 border-[#4a5a5c] flex flex-col overflow-hidden">
            <div className="h-[80px] shrink-0 flex items-end pl-[4px] pb-[5px] gap-[5px]">
              <Cell className="w-[151px] h-[26px] bg-[#ffa115]">Fold</Cell>
              <Cell className="w-[151px] h-[26px] bg-[#a7bab7] text-[#46575a]">Scale</Cell>
            </div>
            <div className="flex flex-1 min-h-0">
              <div className="w-[36px] shrink-0 border-r-2 border-[#3c494b] flex flex-col items-center justify-between pt-[4px] pb-[4px] pr-[1px]">
                <Headphone />
                <div className="w-[25px] h-[26px] rounded-full border-2 border-[#3c494b] bg-[#c6d1cd] flex items-center justify-center"><Tri dir="right" className="w-[10px] h-[14px] text-[#0c1113]" /></div>
              </div>
              <div className="flex-1 flex flex-col min-w-0">
                {names.map(([t, c]) => (
                  <div key={t} className="h-[48px] shrink-0 flex border-b-2 border-[#3c494b]">
                    <span className="w-[230px] pl-[7px] flex items-center whitespace-nowrap border-r-2 border-[#3c494b]">{t}</span>
                    <div className={`flex-1 ${c}`} />
                  </div>
                ))}
                <div className="flex-1" />
                <div className="h-[8px] bg-[#384547] shrink-0" />
                <div className="h-[70px] shrink-0 bg-[#91a5a2] relative pl-[7px] pt-[2px] leading-[26px]">
                  Velocity
                  <span className="absolute right-[16px] top-[14px]">85</span>
                  <div className="absolute right-0 top-[5px] w-[10px] h-[2px] bg-[#0c1113]" />
                  <div className="absolute right-0 top-[24px] w-[10px] h-[2px] bg-[#0c1113]" />
                  <div className="absolute right-0 bottom-[6px] w-[10px] h-[2px] bg-[#0c1113]" />
                </div>
              </div>
            </div>
          </div>
          <div className="flex flex-col w-[2145px] shrink-0">
            <PianoCanvas />
            <div className="h-[8px] bg-[#384547] shrink-0 relative"><div className="absolute left-[1454px] top-0 w-[2px] h-[8px] bg-white" /></div>
            <VelocityCanvas />
          </div>
        </div>
      </div>
    </div>
  );
}

function StatusBar() {
  return (
    <div className="h-[76px] shrink-0 flex items-start pl-[16px]">
      <div className="mt-[18px] w-[38px] h-[38px] rounded-full bg-[#3a4749] flex items-center justify-center">
        <svg width="22" height="26"><polygon points="1,1 21,13 1,25" fill="#a8bab8" /></svg>
      </div>
      <div className="ml-[16px] mt-[16px] w-[2273px] h-[44px] bg-[#384547] rounded-[8px] p-[6px] pb-[6px] flex">
        <div className="w-full h-[32px] bg-[#7b8f8c] flex items-center pl-[14px]">Insert Mark 6.1.3</div>
      </div>
      <div className="ml-[18px] w-[411px] h-[60px] bg-[#384547] rounded-b-[8px] pt-[18px] pl-[4px]">
        <div className="w-[400px] h-[40px] bg-black p-[4px]">
          <div className="h-[32px] bg-[#99aba9] relative overflow-hidden">
            <svg width="392" height="32" className="absolute inset-0">
              {Array.from({ length: 60 }, (_, i) => {
                const x = i < 14 ? 8 + i * 13 : i < 40 ? 190 + (i - 14) * 6.6 : 362;
                return i < 52 ? <rect key={i} x={i >= 40 ? 290 + (i - 40) * 6 : x} y="26" width="2" height="3" fill="#0c1113" /> : null;
              })}
              <rect x="268" width="2" height="32" fill="#0c1113" />
              <rect x="0" y="0" width="2" height="4" fill="#0c1113" />
              <rect x="390" y="0" width="2" height="4" fill="#0c1113" />
            </svg>
          </div>
        </div>
      </div>
      <div className="ml-[15px] mt-[16px] w-[343px] h-[44px] bg-[#384547] rounded-[8px] flex items-center pl-[8px] font-bold text-[#0c1113] whitespace-nowrap">
        <span className="w-[115px] shrink-0">1-Coral Kit</span>
        <svg width="212" height="32" className="shrink-0">
          <rect width="212" height="32" fill="#7d918e" />
          <rect width="70" height="5" fill="#74d8e8" />
          <rect x="84" y="5" width="120" height="21" fill="#121718" />
          <rect x="84" width="122" height="5" fill="#5a6b6d" />
          <rect x="206" width="6" height="32" fill="#b8c8c6" />
          {Array.from({ length: 30 }, (_, i) => <rect key={i} x={6 + (i % 10) * 7.5} y={7 + Math.floor(i / 10) * 8} width="5" height="5" fill={i % 3 ? '#a9b8b5' : '#5a6b6d'} />)}
          <rect x="100" y="19" width="8" height="4" fill="#4bff97" />
          <rect x="182" y="18" width="12" height="3" fill="#ffa115" />
        </svg>
      </div>
      <div className="ml-[15px] mt-[18px] w-[40px] h-[38px] rounded-full bg-[#3a4749] flex items-center justify-center">
        <svg width="18" height="26"><polygon points="6,0 12,0 18,24 0,24" fill="#b7c5c1" /></svg>
      </div>
    </div>
  );
}

export default function App() {
  return (
    <div className="w-[3200px] h-[1800px] overflow-hidden bg-linear-to-b from-[#5e7072] to-[#566769] flex flex-col font-['Inter','Liberation_Sans',sans-serif] text-[20px] leading-none text-[#0c1113]">
      <TopBar />
      <div className="h-[788px] shrink-0 pl-[16px] flex gap-[16px]">
        <Browser />
        <Arrangement />
      </div>
      <div className="mt-[16px] pl-[16px] shrink-0"><Detail /></div>
      <StatusBar />
    </div>
  );
}
